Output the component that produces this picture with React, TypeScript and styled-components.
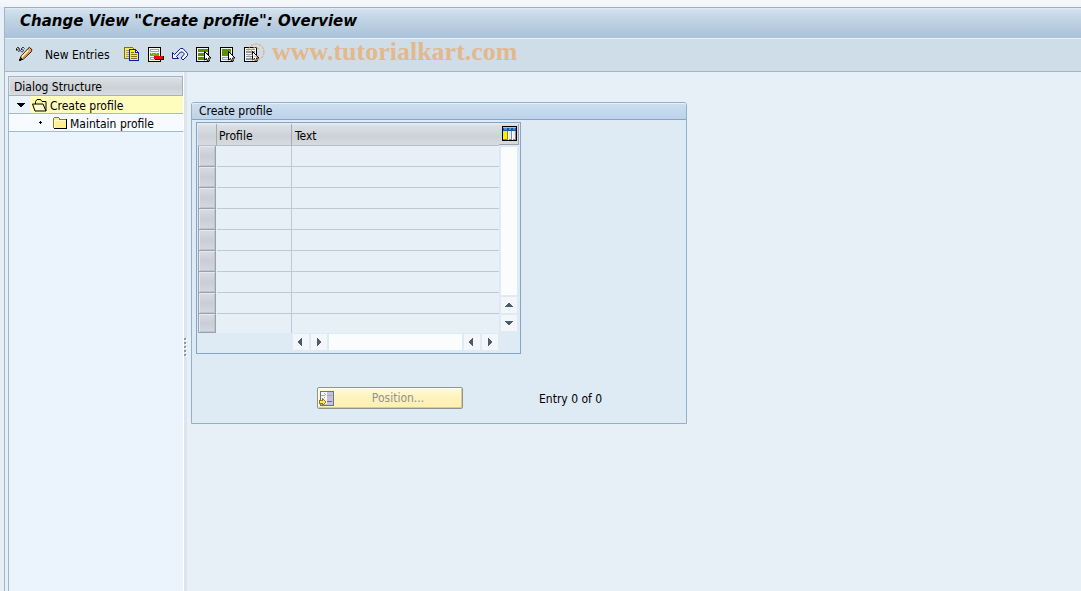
import React from "react";
import styled, { createGlobalStyle, css } from "styled-components";

const GlobalStyle = createGlobalStyle`
  *, *::before, *::after { box-sizing: border-box; }
  body {
    margin: 0;
    background: #e8f0f7;
    color: #000;
    font-family: "DejaVu Sans Condensed", "Noto Sans", sans-serif;
    font-size: 12px;
    line-height: 16px;
  }
  button { font: inherit; color: inherit; }
`;

const Page = styled.div`
  min-height: 100vh;
  display: flex;
  flex-direction: column;
  padding: 7px 0 0 4px;
  background: linear-gradient(#f5f8fc, #f0f4fa 7px, #e8f0f7 7px);
`;

const Window = styled.div`
  flex: 1;
  display: flex;
  flex-direction: column;
  border-left: 1px solid #a3b5c8;
  border-top: 1px solid #9dadc4;
`;

const TitleBar = styled.header`
  height: 31px;
  padding: 0 15px;
  border-bottom: 1px solid #e9f1f8;
  background: linear-gradient(#e4eef6 0, #d0e0ed 2px, #bdd1e2 14px, #a9c2da 30px);
`;

const Title = styled.h1`
  margin: 0;
  font-family: "DejaVu Sans", sans-serif;
  font-size: 15px;
  line-height: 26px;
  font-weight: bold;
  font-style: italic;
  white-space: nowrap;
`;

const Toolbar = styled.div`
  position: relative;
  display: flex;
  align-items: center;
  gap: 8px;
  height: 33px;
  padding: 0 11px 2px;
  background: #cfdde8;
  border-bottom: 1px solid #a3b5c8;
`;

const ToolButton = styled.button`
  display: flex;
  align-items: center;
  height: 16px;
  padding: 0;
  border: 0;
  background: none;
  white-space: nowrap;
`;

const TextTool = styled(ToolButton)`
  margin: 2px 6px 0 4px;
`;

const Watermark = styled.span`
  position: absolute;
  left: 241px;
  top: 0;
  display: flex;
  align-items: center;
  gap: 6px;
  color: #e3b88d;
  font-family: "Liberation Serif", serif;
  font-size: 26px;
  line-height: 26px;
  font-weight: bold;
  white-space: nowrap;
  pointer-events: none;
`;

const Icon = styled.svg`
  display: block;
  flex: none;
  shape-rendering: crispEdges;
`;

const Body = styled.div`
  flex: 1;
  display: flex;
`;

const Sidebar = styled.nav`
  width: 175px;
  flex: none;
  margin: 4px 0 0 3px;
  border-left: 1px solid #a3b5c8;
  background: #ebf4fd;
`;

const SideHeading = styled.h2`
  margin: 0;
  height: 20px;
  padding: 1px 6px 0 5px;
  border: 1px solid #a3b1c2;
  border-left: 0;
  box-shadow: inset 1px 1px #e3e7ea;
  background: linear-gradient(#dce1e4, #cdd1d8 60%, #d8dcdf);
  font-size: 12px;
  line-height: 18px;
  font-weight: normal;
`;

const Tree = styled.ul`
  list-style: none;
  margin: 0;
  padding: 0;
`;

const TreeItem = styled.li`
  display: flex;
  height: 18px;
  border-bottom: 1px solid #a3b9cf;
`;

const Marker = styled.span<{ $level: number }>`
  display: flex;
  align-items: center;
  justify-content: flex-end;
  flex: none;
  width: ${(p) => (p.$level ? 42 : 21)}px;
  padding-right: ${(p) => (p.$level ? 9 : 5)}px;
  background: ${(p) => (p.$level ? "#f7fbff" : "#ebf4fd")};
`;

const TreeLink = styled.button<{ $selected?: boolean }>`
  flex: 1;
  display: flex;
  align-items: center;
  gap: 2px;
  padding: 2px 2px 0;
  border: 0;
  background: ${(p) => (p.$selected ? "#fffdbe" : "#f7fbff")};
  white-space: nowrap;
`;

const Splitter = styled.div`
  width: 4px;
  flex: none;
  display: flex;
  align-items: center;
  padding-top: 32px;
  background: #dce5ec;
  border-left: 1px solid #fff;
`;

const Main = styled.main`
  flex: 1;
  min-width: 0;
  padding: 30px 4px 20px;
`;

const Group = styled.section`
  max-width: 496px;
  border: 1px solid #92afcc;
  border-radius: 3px 3px 0 0;
  background: #deeaf4;
`;

const GroupTitle = styled.h2`
  margin: 0;
  height: 17px;
  padding: 0 7px;
  border-bottom: 1px solid #86a4c6;
  border-radius: 2px 2px 0 0;
  box-shadow: inset 0 1px #e6f0f8;
  background: linear-gradient(#cddfee, #bcd3ea);
  font-size: 12px;
  line-height: 16px;
  font-weight: normal;
`;

const GridFrame = styled.div`
  width: 325px;
  margin: 2px 4px 0;
  border: 1px solid #86a4c6;
  padding: 1px 1px 3px;
`;

const GridBody = styled.div`
  display: flex;
`;

const Grid = styled.table`
  flex: 1;
  table-layout: fixed;
  border-collapse: separate;
  border-spacing: 0;
  background: #e8f0f7;
`;

const steel = css`
  background: linear-gradient(#dde2e5, #cdd1d8 60%, #d8dcdf);
`;

const HeadCell = styled.th<{ $width?: number }>`
  ${steel}
  width: ${(p) => (p.$width ? `${p.$width}px` : "auto")};
  height: 22px;
  padding: 2px 2px 0 ${(p) => (p.$width ? 2 : 3)}px;
  border-right: ${(p) => (p.$width ? "1px solid #a5abb3" : "0")};
  border-bottom: 1px solid #b4bfca;
  box-shadow: inset 0 1px #e5e9ec;
  font-weight: normal;
  text-align: left;
`;

const SelectCell = styled.td`
  padding: 0;
  height: 21px;
  tr:last-child & { height: 19px; }
`;

const RowSelector = styled.button`
  display: block;
  width: 18px;
  height: 21px;
  padding: 0;
  border: 1px solid #98a3b1;
  border-top: 0;
  box-shadow: inset 1px 1px #e6eaee, inset -1px -1px #bfc5ce;
  background: linear-gradient(#d8dce2, #cacdd7 50%, #d4d8df);
  tr:last-child & { height: 19px; }
`;

const Cell = styled.td<{ $last?: boolean }>`
  padding: 0;
  border-bottom: 1px solid #bfc9d6;
  border-right: ${(p) => (p.$last ? "0" : "1px solid #bfc9d6")};
  tr:last-child & { border-bottom: 0; }
`;

const VerticalBar = styled.div`
  display: flex;
  flex-direction: column;
  gap: 2px;
  width: 20px;
  padding-bottom: 2px;
`;

const ConfigButton = styled.button`
  ${steel}
  display: flex;
  height: 21px;
  padding: 2px 1px 2px 3px;
  border: 0;
  border-right: 1px solid #9ba4af;
  border-bottom: 1px solid #9ba4af;
`;

const Track = styled.div`
  flex: 1;
  background: #fbfcfd;
`;

const VerticalTrack = styled(Track)`
  margin: 0 2px;
`;

const ScrollButton = styled.button`
  display: flex;
  align-items: center;
  justify-content: center;
  width: 16px;
  height: 16px;
  padding: 0;
  border: 0;
  background: #f3f7fc;
`;

const VerticalButton = styled(ScrollButton)`
  margin-left: 2px;
`;

const HorizontalBar = styled.div`
  display: flex;
  gap: 2px;
  height: 16px;
  margin: 1px 21px 0 95px;
`;

const Footer = styled.footer`
  display: flex;
  align-items: center;
  gap: 76px;
  padding: 33px 20px 14px 125px;
`;

const PositionButton = styled.button`
  display: flex;
  align-items: center;
  width: 146px;
  height: 22px;
  padding: 0 0 0 1px;
  border: 1px solid #92938f;
  border-radius: 2px;
  box-shadow: inset 1px 1px #fffdf0, inset -1px -1px #d8cc91;
  background: linear-gradient(#fffbe0, #fff2b8 50%, #ffefb5);
  color: #929292;

  span {
    flex: 1;
    text-align: center;
  }
`;

const EntryCount = styled.span`
  padding-top: 2px;
`;

const outline = "#000";

function ChangeIcon() {
  return (
    <Icon width="17" height="16" viewBox="0 0 17 16">
      <g fill="none" stroke="#111" strokeWidth="1" shapeRendering="auto">
        <path d="M.5 4.5v-2l1-1h1l1 1M5.5 4V2.5l1-1h1l1 1" />
        <path d="M1.5 3.5 3 2.5l1 2-1.5 1zM4.5 4.5 6 3l1.5 1-1 2-1.5-.5z" fill="#dff1fb" strokeWidth=".8" />
        <path d="M3.5 14.5 5.2 10.2 12 2.5l1.5-1L16 3.7 15 6l-7.5 7z" fill="#f3c46f" />
        <path d="M6 10.8 12 4.5" stroke="#fff2bd" strokeWidth="1.5" />
        <path d="M7.3 12 13.5 5.7" stroke="#d6823a" strokeWidth="1.5" />
        <path d="M12.6 3 15 5" stroke="#e89168" strokeWidth="1.5" />
      </g>
      <path d="M4 11h1v1h1v1h1v1H5v1H3v-2h1z" fill="#111" />
    </Icon>
  );
}

function CopyIcon() {
  return (
    <Icon width="16" height="15" viewBox="0 0 16 15">
      <path d="M0 0h9v1h1v11H0z" fill="#776f3b" />
      <path d="M1 1h8v10H1z" fill="#f8ee4a" />
      <path d="M2 3h3v1H2zM2 5h3v1H2zM2 7h3v1H2zM2 9h3v1H2z" fill="#a39b58" />
      <path d="M5 2h7v1h1v1h1v1h1v9H5z" fill="#1515bb" />
      <path d="M6 3h5v3h3v7H6z" fill="#fff200" />
      <path d="M12 4h1v1h-1z" fill="#fff" />
      <path d="M7 5h3v1H7zM7 7h6v1H7zM7 9h6v1H7zM7 11h6v1H7z" fill="#77762f" />
    </Icon>
  );
}

function DeleteIcon() {
  return (
    <Icon width="16" height="15" viewBox="0 0 16 15">
      <path d="M0 0h13v15H0z" fill={outline} />
      <path d="M1 1h11v13H1z" fill="#f5fbe9" />
      <path d="M2 2h9v3H2zM2 10h8v3H2z" fill="#9ca1bf" />
      <path d="M3 3h7v1H3zM3 11h5v1H3z" fill="#fff" />
      <path d="M2 6h9v3H2z" fill="#73a516" />
      <path d="M3 6h1v1H3zM5 7h1v1H5zM8 6h1v1H8z" fill="#c5dc6a" />
      <path d="M7 9h9v4H7z" fill={outline} />
      <path d="M6 9h9v3H6z" fill="#f00012" />
    </Icon>
  );
}

function UndoIcon() {
  return (
    <Icon width="16" height="14" viewBox="0 0 16 14">
      <path
        d="M.5 5.5v6h6l-2-2L8.500 5h2L12 6.500v1L9 11l2 2 4.500-4.500V6.500L11 1.500H8.500L2.500 7.500z"
        fill="#edf5fd"
        stroke="#15159a"
        shapeRendering="auto"
      />
    </Icon>
  );
}

function Pointer() {
  return (
    <path
      d="M8.500 4.500 15 11h-2.500l1 3h-2l-1-2.500-2 1.500z"
      fill="#fff"
      stroke={outline}
      shapeRendering="auto"
    />
  );
}

function SelectIcon({ kind }: { kind: "all" | "block" | "none" }) {
  return (
    <Icon width="16" height="15" viewBox="0 0 16 15">
      <path d="M0 0h13v15H0z" fill={outline} />
      <path d="M1 1h11v13H1z" fill="#f2f8ee" />
      {kind === "all" && <path d="M2 2h10v3H2zM2 6h10v3H2zM2 10h10v3H2z" fill="#5d8f00" />}
      {kind === "block" && (
        <>
          <path d="M2 2h9v7H2z" fill="#5d8f00" />
          <path d="M2 10h8v3H2z" fill="#91a6b8" />
          <path d="M3 11h6v1H3z" fill="#f2f8ee" />
        </>
      )}
      {kind === "none" && (
        <path d="M2 2h9v1H2zM2 4h9v2H2zM2 7h8v1H2zM2 9h8v1H2zM2 11h8v2H2z" fill="#8497ab" />
      )}
      <Pointer />
    </Icon>
  );
}

function CopyrightMark() {
  return (
    <svg width="20" height="24" viewBox="0 0 20 24" fill="none" stroke="#e2a56c">
      <circle cx="10" cy="12" r="8" strokeDasharray="3 1" />
      <path d="M13 9a4.500 4.500 0 1 0 0 6" strokeDasharray="3 1" />
    </svg>
  );
}

function FolderIcon({ open }: { open?: boolean }) {
  return open ? (
    <Icon width="16" height="13" viewBox="0 0 16 13">
      <path
        d="M3.500 5v-2.500l1.500-2h3.500l1.500 2h4v9.500h-11l-2.500-7h10.500l3 7"
        fill="#fff6a2"
        stroke={outline}
        shapeRendering="auto"
      />
      <path d="M2 6h8l2 5H4z" fill="#fffbd8" shapeRendering="auto" />
    </Icon>
  ) : (
    <Icon width="15" height="13" viewBox="0 0 15 13">
      <path d="M1 1h6v1h7v10H1z" fill={outline} />
      <path d="M0 1h1V0h5v1h1v1h6v9H0z" fill="#8d7c22" />
      <path d="M1 1h5v2h7v8H1z" fill="#ffee92" />
      <path d="M1 3h12v1H1zM1 4h1v7H1z" fill="#fffbd4" />
    </Icon>
  );
}

function ColumnsIcon() {
  return (
    <Icon width="15" height="15" viewBox="0 0 15 15">
      <path d="M0 0h15v15H0z" fill={outline} />
      <path d="M1 1h13v4H1z" fill="#145c9f" />
      <path d="M1 1h13v1H1z" fill="#9bc9ea" />
      <path d="M2 2h3v2H2zM7 2h2v2H7zM11 2h2v2h-2z" fill="#4b91cc" />
      <path d="M1 5h13v9H1z" fill="#858b96" />
      <path d="M1 5h4v8H1z" fill="#ffed00" />
      <path d="M5 5h1v9H1v-1h4z" fill="#a58a00" />
      <path d="M7 5h2v8H7zM11 5h2v8h-2z" fill="#e9edf2" />
      <path d="M6 5h1v9H6zM10 5h1v9h-1z" fill="#fff" />
    </Icon>
  );
}

function PositionIcon() {
  return (
    <Icon width="15" height="15" viewBox="0 0 15 15">
      <path d="M1 0h14v15H1z" fill="#6e7381" />
      <path d="M2 1h12v13H2z" fill="#c3c1df" />
      <path d="M2 1h6v12H2z" fill="#f5f5f5" />
      <path d="M2 4h4v1H2zM5 2h1v1H5zM6 3h1v1H6zM5 6h1v1H5zM8 4h5v1H8z" fill="#a5a9ae" />
      <path d="M8 10h5v1H8z" fill="#686d7a" />
      <path d="M0 9h3V7h1v1h1v1h1v1h1v2H6v1H5v1H4v1H3v-2H0z" fill="#8a7d14" />
      <path d="M1 10h3V9l2 2-2 2v-1H1z" fill="#ffec4a" />
    </Icon>
  );
}

const arrows = {
  up: "M0 6V5h1V4h1V3h1V2h2v1h1v1h1v1h1v1z",
  down: "M0 2h8v1H7v1H6v1H5v1H3V5H2V4H1V3H0z",
  left: "M5 0v8H4V7H3V6H2V5H1V3h1V2h1V1h1V0z",
  right: "M2 0h1v1h1v1h1v1h1v2H5v1H4v1H3v1H2z",
};

function Arrow({ direction, color = "#4c5d69" }: { direction: keyof typeof arrows; color?: string }) {
  return (
    <Icon width="8" height="8" viewBox="0 0 8 8">
      <path d={arrows[direction]} fill={color} />
    </Icon>
  );
}

const rows = Array.from({ length: 9 }, (_, i) => i + 1);

export default function App() {
  return (
    <>
      <GlobalStyle />
      <Page>
        <Window>
          <TitleBar>
            <Title>Change View "Create profile": Overview</Title>
          </TitleBar>
          <Toolbar role="toolbar">
            <ToolButton aria-label="Display / Change"><ChangeIcon /></ToolButton>
            <TextTool>New Entries</TextTool>
            <ToolButton aria-label="Copy as"><CopyIcon /></ToolButton>
            <ToolButton aria-label="Delete"><DeleteIcon /></ToolButton>
            <ToolButton aria-label="Undo"><UndoIcon /></ToolButton>
            <ToolButton aria-label="Select all"><SelectIcon kind="all" /></ToolButton>
            <ToolButton aria-label="Select block"><SelectIcon kind="block" /></ToolButton>
            <ToolButton aria-label="Deselect all"><SelectIcon kind="none" /></ToolButton>
            <Watermark><CopyrightMark />www.tutorialkart.com</Watermark>
          </Toolbar>
          <Body>
            <Sidebar>
              <SideHeading>Dialog Structure</SideHeading>
              <Tree>
                <TreeItem>
                  <Marker $level={0}><Arrow direction="down" color="#000" /></Marker>
                  <TreeLink $selected><FolderIcon open />Create profile</TreeLink>
                </TreeItem>
                <TreeItem>
                  <Marker $level={1}>
                    <Icon width="3" height="3"><path d="M1 0h1v1h1v1H2v1H1V2H0V1h1z" fill="#000" /></Icon>
                  </Marker>
                  <TreeLink><FolderIcon />Maintain profile</TreeLink>
                </TreeItem>
              </Tree>
            </Sidebar>
            <Splitter>
              <Icon width="3" height="20" viewBox="0 0 3 20">
                {[0, 4, 8, 12, 16].map((y) => (
                  <React.Fragment key={y}>
                    <path d={`M1 ${y + 1}h2v2H1z`} fill="#fff" />
                    <path d={`M0 ${y}h2v2H0z`} fill="#8b9ba9" />
                  </React.Fragment>
                ))}
              </Icon>
            </Splitter>
            <Main>
              <Group>
                <GroupTitle>Create profile</GroupTitle>
                <GridFrame>
                  <GridBody>
                    <Grid>
                      <thead>
                        <tr>
                          <HeadCell $width={19} aria-label="Selection" />
                          <HeadCell $width={75}>Profile</HeadCell>
                          <HeadCell>Text</HeadCell>
                        </tr>
                      </thead>
                      <tbody>
                        {rows.map((row) => (
                          <tr key={row}>
                            <SelectCell><RowSelector aria-label={`Select row ${row}`} /></SelectCell>
                            <Cell />
                            <Cell $last />
                          </tr>
                        ))}
                      </tbody>
                    </Grid>
                    <VerticalBar>
                      <ConfigButton aria-label="Configure columns"><ColumnsIcon /></ConfigButton>
                      <VerticalTrack />
                      <VerticalButton aria-label="Scroll up"><Arrow direction="up" /></VerticalButton>
                      <VerticalButton aria-label="Scroll down"><Arrow direction="down" /></VerticalButton>
                    </VerticalBar>
                  </GridBody>
                  <HorizontalBar>
                    <ScrollButton aria-label="First column"><Arrow direction="left" /></ScrollButton>
                    <ScrollButton aria-label="Next column"><Arrow direction="right" /></ScrollButton>
                    <Track />
                    <ScrollButton aria-label="Previous column"><Arrow direction="left" /></ScrollButton>
                    <ScrollButton aria-label="Last column"><Arrow direction="right" /></ScrollButton>
                  </HorizontalBar>
                </GridFrame>
                <Footer>
                  <PositionButton><PositionIcon /><span>Position...</span></PositionButton>
                  <EntryCount>Entry 0 of 0</EntryCount>
                </Footer>
              </Group>
            </Main>
          </Body>
        </Window>
      </Page>
    </>
  );
}
